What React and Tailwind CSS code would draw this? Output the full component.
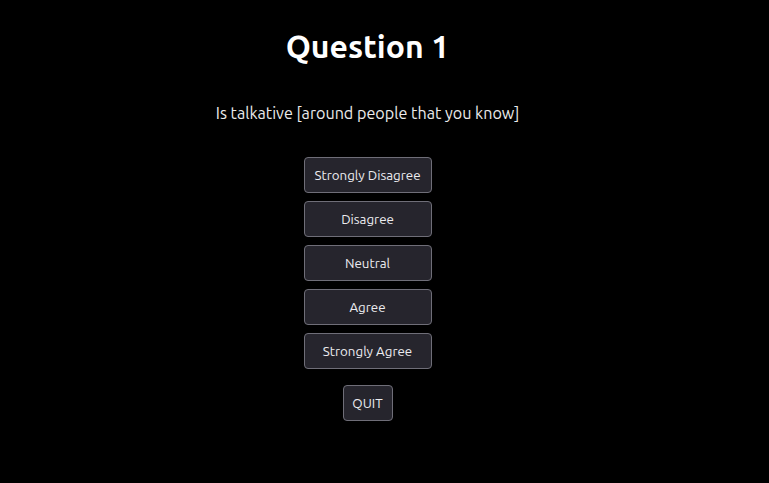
import React, {useState} from "react";

const OPTIONS = ["Strongly Disagree", "Disagree", "Neutral", "Agree", "Strongly Agree"];

const App = () => {
  const [answers, setAnswers] = useState([]);

  return (
    <div
      className="min-h-screen w-full bg-black text-white flex flex-col items-center pt-[26px] pr-[34px]"
      style={{fontFamily: "Ubuntu, 'Noto Sans', sans-serif"}}
    >
      <h1 className="text-[32px] leading-[40px] font-bold text-white">Question 1</h1>
      <p className="mt-[35px] text-[16.15px] leading-6 text-[#ececec]">
        Is talkative [around people that you know]
      </p>

      <div className="mt-[32px] flex flex-col gap-2">
        {OPTIONS.map(option => (
          <button
            key={option}
            onClick={() => setAnswers([...answers, option])}
            className="w-32 h-9 rounded bg-[#26252d] border border-[#6f6e78] text-[13.33px] leading-4 pt-px text-[#ececf0] hover:bg-[#34333d]"
          >
            {option}
          </button>
        ))}
      </div>

      <button className="mt-4 w-[50px] h-9 rounded bg-[#26252d] border border-[#6f6e78] text-[13.33px] leading-4 pt-px text-[#ececf0]">
        QUIT
      </button>
    </div>
  );
};

export default App;
